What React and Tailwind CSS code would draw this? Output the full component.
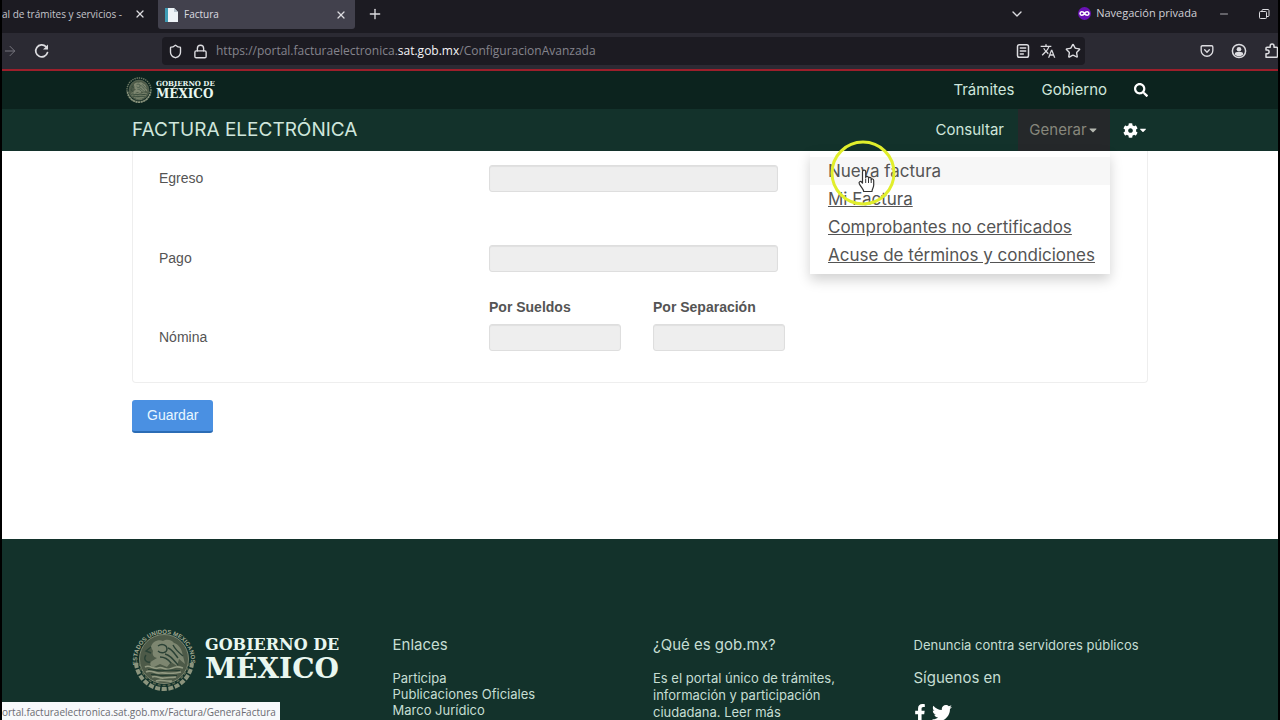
import React from "react";
import { Shield, Star, Lock, X, Plus, ChevronDown, ArrowRight, Minus } from "lucide-react";
import { FaFacebookF, FaTwitter, FaCog, FaSearch, FaCaretDown } from "react-icons/fa";
import { MdTranslate } from "react-icons/md";
import { FiPocket } from "react-icons/fi";

const ui = "font-['Open_Sans','Noto_Sans',sans-serif]";

function Seal({ className, lettering }) {
  return (
    <svg viewBox="0 0 64 64" className={className} aria-hidden="true">
      <defs>
        <path id="seal-arc" d="M 6 41 A 27 27 0 1 1 58 41" />
      </defs>
      {lettering ? (
        <text fill="#a3aa92" fontSize="6" fontWeight="700" fontFamily="Liberation Sans, sans-serif">
          <textPath href="#seal-arc" startOffset="3">ESTADOS UNIDOS MEXICANOS</textPath>
        </text>
      ) : (
        <circle cx="32" cy="32" r="29.5" fill="none" stroke="#6b7863" strokeWidth="3.5" strokeDasharray="3.5 2" />
      )}
      <circle cx="32" cy="32" r="24.5" fill="#4d5a48" stroke="#7f8872" strokeWidth="1" />
      <path d="M4 36c1 13 12 26 28 26s27-13 28-26" fill="none" stroke="#8b947d" strokeWidth="4" strokeDasharray="5 1.6" />
      <path d="M7 36c2 12 12 22.500 25 22.500S55 48 57 36" fill="none" stroke="#59664f" strokeWidth="1.500" strokeDasharray="3 2" />
      <path d="M19 20c1-5 7-8 12-6 3-2 8-2 11 2 4 1 7 5 8 9l3 12-6-5-2 7-6-4-4 5-7-3-6 3c-4 0-5-4-2-6l5-3c-4-1-5-4-4-7z" fill="#7d8670" />
      <path d="M26 19c4-3 9-1 9 3s-6 5-9 2M36 21c4 1 6 5 10 10M33 27c5 1 8 5 13 11M28 30c4 0 8 2 11 6M41 18c2 4 5 7 10 11M19 20l-5 4 5 2M14 28c-3 4 0 8 4 7" fill="none" stroke="#2b4236" strokeWidth="1.400" />
      <path d="M13 40c5-3 8 3 13 1s7 3 12 1 7-3 13-1M14 45c6-3 9 2 14 1s9 2 21-1M20 50c5-2 7 2 12 1s7 0 12-1M24 54c5-2 10 1 16 0" fill="none" stroke="#929a82" strokeWidth="1.700" />
      <path d="M16 42.500c7 0 10 2 16 1s10 0 16 0M19 47.500c5-1 8 2 13 1s8 0 13 0" fill="none" stroke="#243c30" strokeWidth="1.200" />
    </svg>
  );
}

function Brand({ large }) {
  return large ? (
    <a href="#inicio" className="flex items-center gap-[9px] font-['DejaVu_Serif',serif] font-bold text-[#e9f7f0]">
      <Seal className="size-16 shrink-0" lettering />
      <span className="flex flex-col whitespace-nowrap">
        <span className="text-[16px] leading-[20px]">GOBIERNO DE</span>
        <span className="text-[28px] leading-[28px]">MÉXICO</span>
      </span>
    </a>
  ) : (
    <a href="#inicio" className="flex items-center gap-1 font-['DejaVu_Serif',serif] font-bold text-[#e9f7f0]">
      <Seal className="size-[26px] shrink-0" />
      <span className="flex flex-col whitespace-nowrap">
        <span className="text-[7px] leading-[8px]">GOBIERNO DE</span>
        <span className="text-[12px] leading-[13px]">MÉXICO</span>
      </span>
    </a>
  );
}

function TabBar() {
  return (
    <div className="flex h-[33px] items-start bg-[#1c1b22] text-[10px] text-[#dcdce0]">
      <div className="flex h-[28px] w-[144px] items-center justify-between">
        <span className="whitespace-nowrap text-[#c5c5cc]">al de trámites y servicios -</span>
        <button aria-label="Cerrar pestaña"><X className="size-3" strokeWidth={2.5} /></button>
      </div>
      <div className="ml-3 flex h-[29px] w-[197px] items-center rounded-b-[3px] bg-[#42414d] pl-1.5 pr-2">
        <svg viewBox="0 0 16 16" className="size-4 shrink-0" aria-hidden="true">
          <path d="M1 1h9l4 4v10H1z" fill="#eef3f7" />
          <path d="M1 1h3v14H1z" fill="#3f9cb5" />
          <path d="M10 1v4h4z" fill="#b9c6d0" />
        </svg>
        <span className="ml-1 flex-1">Factura</span>
        <button aria-label="Cerrar Factura"><X className="size-3" strokeWidth={2.5} /></button>
      </div>
      <button aria-label="Nueva pestaña" className="ml-3 flex h-[28px] items-center"><Plus className="size-4" strokeWidth={2} /></button>
      <div className="ml-auto flex h-[27px] items-center">
        <button aria-label="Listar pestañas"><ChevronDown className="size-4" strokeWidth={2} /></button>
        <span className="ml-[53px] flex items-center gap-[5px]">
          <svg viewBox="0 0 14 14" className="size-[13px]" aria-hidden="true">
            <circle cx="7" cy="7" r="7" fill="#6a12b5" />
            <path d="M7 7C5.500 4.500 2.200 4.700 2.200 7S5.500 9.500 7 7s4.800-2.300 4.800 0S8.500 9.500 7 7z" fill="none" stroke="#fff" strokeWidth="1.700" />
          </svg>
          <span className="whitespace-nowrap text-[11px] text-[#d0d0d6]">Navegación privada</span>
        </span>
        <button aria-label="Minimizar" className="ml-[21px]"><Minus className="size-3" strokeWidth={1.5} /></button>
        <button aria-label="Restaurar" className="ml-7 mr-2">
          <svg viewBox="0 0 12 12" className="size-3" fill="none" stroke="currentColor" aria-hidden="true">
            <rect x="1.500" y="3.500" width="7" height="7" rx="1" />
            <path d="M4 3.500V2.500a1 1 0 0 1 1-1h5a1 1 0 0 1 1 1v5a1 1 0 0 1-1 1H8.500" />
          </svg>
        </button>
      </div>
    </div>
  );
}

function AddressBar() {
  return (
    <div className="flex h-9 items-center overflow-hidden bg-[#2b2a33] text-[#dcdce0]">
      <button aria-label="Adelante" className="text-[#76757e]"><ArrowRight className="size-4" strokeWidth={1.5} /></button>
      <button aria-label="Recargar" className="ml-4">
        <svg viewBox="0 0 16 16" className="size-4" fill="none" stroke="currentColor" strokeWidth="1.700" strokeLinecap="round" aria-hidden="true">
          <path d="M13.500 9.500A6 6 0 1 1 12 3.700" />
          <path d="M14 1.500v5H9z" fill="currentColor" stroke="none" />
        </svg>
      </button>
      <div className="ml-[112px] flex h-7 flex-1 items-center rounded bg-[#1c1b22] pl-1.5 pr-1">
        <Shield className="size-[15px]" strokeWidth={2.2} />
        <Lock className="ml-[10px] size-[15px]" strokeWidth={2.2} />
        <span className="ml-2 whitespace-nowrap text-[12px] text-[#85848d]">
          https://portal.facturaelectronica.<span className="text-[#f4f4f7]">sat.gob.mx</span>/ConfiguracionAvanzada
        </span>
        <span className="ml-auto flex items-center gap-[9px]">
          <button aria-label="Vista de lectura">
            <svg viewBox="0 0 16 16" className="size-4" fill="none" stroke="currentColor" strokeWidth="1.500" strokeLinecap="round" aria-hidden="true">
              <rect x="2.500" y="1.800" width="11" height="12.400" rx="1.800" />
              <path d="M5.300 5h5.400M5.300 8h5.400M5.300 11h3" />
            </svg>
          </button>
          <button aria-label="Traducir"><MdTranslate className="size-4" /></button>
          <button aria-label="Marcador"><Star className="size-4" strokeWidth={2.1} /></button>
        </span>
      </div>
      <div className="ml-[115px] flex items-center gap-[17px]">
        <button aria-label="Pocket"><FiPocket className="size-[14px]" strokeWidth={2.3} /></button>
        <button aria-label="Cuenta">
          <svg viewBox="0 0 16 16" className="size-4" fill="none" stroke="currentColor" strokeWidth="1.500" aria-hidden="true">
            <circle cx="8" cy="8" r="6.600" />
            <circle cx="8" cy="6.200" r="2.300" fill="currentColor" stroke="none" />
            <path d="M3.800 11.400c0-1.600 1-2.400 2.200-2.400h4c1.200 0 2.200.8 2.200 2.400-1 1.200-2.500 1.800-4.200 1.800s-3.200-.6-4.200-1.800z" fill="currentColor" stroke="none" />
          </svg>
        </button>
        <button aria-label="Extensiones" className="w-[14px] overflow-hidden">
          <svg viewBox="0 0 16 16" className="size-4" fill="none" stroke="currentColor" strokeWidth="1.500" strokeLinejoin="round" aria-hidden="true">
            <path d="M2 14.200V10.800h1.200a1.900 1.900 0 0 0 0-3.800H2V5.200a1 1 0 0 1 1-1h3.200V3a1.900 1.900 0 0 1 3.800 0v1.200h2.500a1 1 0 0 1 1 1v8a1 1 0 0 1-1 1z" />
          </svg>
        </button>
      </div>
    </div>
  );
}

const menuItems = ["Mi Factura", "Comprobantes no certificados", "Acuse de términos y condiciones"];

function Pointer() {
  return (
    <svg viewBox="0 0 66 66" className="pointer-events-none absolute -top-[11px] left-5 size-[66px]" aria-hidden="true">
      <circle cx="33" cy="33" r="31" fill="none" stroke="#e1ee2c" strokeWidth="3" />
      <path d="M33.500 46V35c0-2.500 3.200-2.500 3.200 0v5.500c.3-1.800 2.800-1.500 2.800.3v.6c.4-1.500 2.700-1.200 2.700.4v.9c.5-1.300 2.500-.9 2.500.8V48c0 3-1.700 4-1.700 6.500h-8.300c0-2-2.500-4-4.300-7.500-1.200-2.300 1.200-3.300 2.400-1.700z" fill="#fff" stroke="#333" strokeWidth="1.200" strokeLinejoin="round" transform="translate(-1 -3)" />
      <path d="M38.500 39v4M41.200 39.500v3.500M35.700 38.500v4.500" stroke="#333" strokeWidth="1" />
    </svg>
  );
}

function SiteHeader() {
  return (
    <header className="text-[15px] text-[#cfe6dc]">
      <div className="bg-[#0c231e]">
        <div className="mx-auto flex h-[38px] max-w-[1042px] items-center justify-between pl-[7px] pr-[13px]">
          <Brand />
          <nav className="flex items-center gap-[27px]">
            <a href="#tramites">Trámites</a>
            <a href="#gobierno">Gobierno</a>
            <button aria-label="Buscar" className="text-white"><FaSearch className="size-[14px]" /></button>
          </nav>
        </div>
      </div>
      <div className="bg-[#13322b]">
        <div className="mx-auto flex h-[42px] max-w-[1042px] items-center justify-between px-[13px]">
          <a href="#factura" className="text-[19px]">FACTURA ELECTRÓNICA</a>
          <nav className="flex h-full items-center">
            <a href="#consultar">Consultar</a>
            <div className="relative ml-[14px] h-full">
              <button aria-expanded="true" className="flex h-full w-[92px] items-center justify-center bg-[#25282a] text-[#87877c]">
                Generar<FaCaretDown className="size-3 text-[#b5b8b0]" />
              </button>
              <div className="absolute right-0 top-full z-10 w-[300px] bg-white pb-[5px] pt-1.5 text-[17px] text-[#545454] shadow-[0_6px_12px_rgba(0,0,0,0.18)]">
                <a href="#nueva" className="block h-7 bg-[#f7f7f7] px-[18px] leading-7">Nueva factura</a>
                {menuItems.map((t) => (
                  <a key={t} href="#menu" className="block h-7 whitespace-nowrap px-[18px] leading-7 underline">{t}</a>
                ))}
                <Pointer />
              </div>
            </div>
            <button aria-label="Configuración" className="ml-[13px] flex items-center text-white">
              <FaCog className="size-[15px]" /><FaCaretDown className="size-2.5" />
            </button>
          </nav>
        </div>
      </div>
    </header>
  );
}

function Field({ id }) {
  return <input id={id} disabled className="h-[27px] w-full rounded-[3px] border border-[#dedede] bg-[#eee] px-2 shadow-[inset_0_1px_1px_rgba(0,0,0,0.06)]" />;
}

function ConfigForm() {
  return (
    <main className="mx-auto w-full max-w-[1042px] px-[13px] pb-[106px] font-['Liberation_Sans',sans-serif] text-[14px] text-[#545454]">
      <form>
        <div className="rounded-b border border-t-0 border-[#eee] pb-[31px] pl-[26px] pt-[14px]">
          <div className="grid grid-cols-[330px_289px] items-center">
            <label htmlFor="egreso">Egreso</label>
            <Field id="egreso" />
          </div>
          <div className="mt-[53px] grid grid-cols-[330px_289px] items-center">
            <label htmlFor="pago">Pago</label>
            <Field id="pago" />
          </div>
          <fieldset className="mt-[25px] grid grid-cols-[330px_132px_132px] items-end">
            <span className="leading-[27px]">Nómina</span>
            <span>
              <label htmlFor="sueldos" className="mb-[7px] block font-bold leading-5">Por Sueldos</label>
              <Field id="sueldos" />
            </span>
            <span className="ml-8 w-[132px]">
              <label htmlFor="separacion" className="mb-[7px] block whitespace-nowrap font-bold leading-5">Por Separación</label>
              <Field id="separacion" />
            </span>
          </fieldset>
        </div>
        <button type="button" className="mt-[17px] h-[33px] rounded-[3px] border-b-2 border-[#2b6cb5] bg-[#4a90e2] px-[15px] text-[#e8f7ff]">Guardar</button>
      </form>
    </main>
  );
}

function SiteFooter() {
  return (
    <footer className="flex-1 bg-[#13322b] pt-[88px] text-[13px] text-[#c6ded3]">
      <div className="mx-auto grid max-w-[1042px] grid-cols-4">
        <div className="pl-[13px]"><Brand large /></div>
        <div className="pl-[13px]">
          <h5 className="mt-2 text-[15px] leading-5">Enlaces</h5>
          <ul className="mt-[15px] leading-4">
            <li><a href="#participa">Participa</a></li>
            <li><a href="#publicaciones">Publicaciones Oficiales</a></li>
            <li><a href="#marco">Marco Jurídico</a></li>
          </ul>
        </div>
        <div className="px-[13px]">
          <h5 className="mt-2 text-[15px] leading-5">¿Qué es gob.mx?</h5>
          <p className="mt-[15px] leading-[17px]">
            Es el portal único de trámites,<br />información y participación<br />ciudadana. <a href="#leer">Leer más</a>
          </p>
        </div>
        <div className="pl-[13px]">
          <h5 className="mt-2 whitespace-nowrap leading-5"><a href="#denuncia">Denuncia contra servidores públicos</a></h5>
          <h5 className="mt-[13px] text-[15px] leading-5">Síguenos en</h5>
          <div className="mt-[15px] flex items-center gap-1.5 text-white">
            <a href="#facebook" aria-label="Facebook"><FaFacebookF className="h-[18px] w-3" /></a>
            <a href="#twitter" aria-label="Twitter"><FaTwitter className="size-5" /></a>
          </div>
        </div>
      </div>
    </footer>
  );
}

export default function App() {
  return (
    <div className="relative flex h-screen flex-col overflow-hidden border-x-2 border-black bg-white font-['Inter',sans-serif]">
      <div className={ui}>
        <TabBar />
        <AddressBar />
        <div className="h-0.5 bg-[#9c1f2b]" />
      </div>
      <SiteHeader />
      <ConfigForm />
      <SiteFooter />
      <div className={`${ui} absolute bottom-0 left-0 z-20 h-[18px] overflow-hidden bg-[#f7f9fb] pr-1 text-[10px] leading-[20px] text-[#6b6b72]`}>
        ortal.facturaelectronica.sat.gob.mx/Factura/GeneraFactura
      </div>
    </div>
  );
}
